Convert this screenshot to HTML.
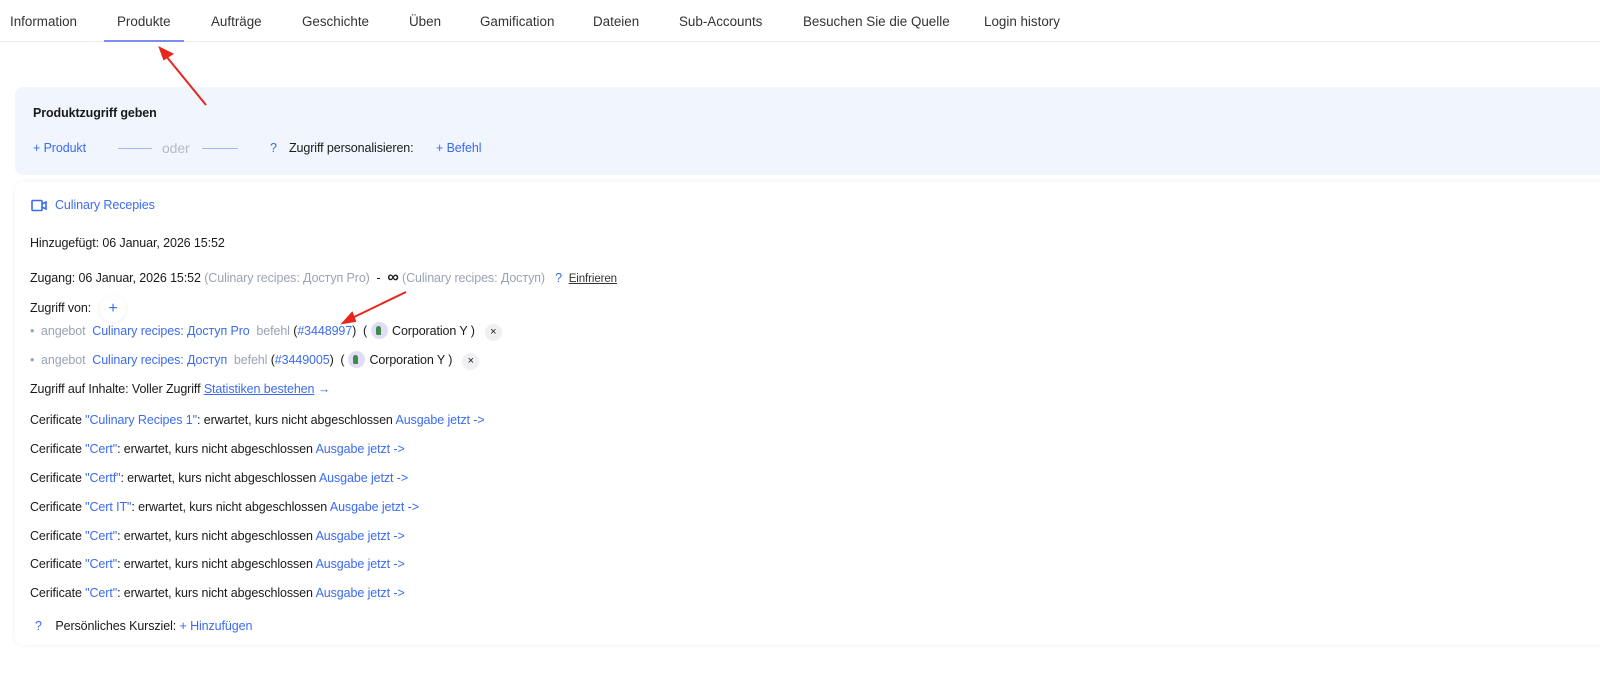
<!DOCTYPE html>
<html><head><meta charset="utf-8"><style>
*{margin:0;padding:0;box-sizing:border-box}
body{width:1600px;height:673px;background:#fff;font-family:"Liberation Sans",sans-serif;color:#1a1a1a;position:relative;overflow:hidden;font-size:12.5px;letter-spacing:-0.1px}
.tabs{position:absolute;left:0;top:0;width:1600px;height:42px;border-bottom:1px solid #ebedf0}
.tab{position:absolute;top:14px;font-size:13.4px;color:#333;letter-spacing:0}
.ul{position:absolute;left:104px;top:40px;width:80px;height:2px;background:#7b8df0}
.box{position:absolute;left:15px;top:87px;width:1600px;height:88px;background:#f0f5fe;border-radius:8px}
.card{position:absolute;left:15px;top:182px;width:1600px;height:463px;background:#fff;border-radius:8px;box-shadow:0 0 6px rgba(0,0,0,0.06)}
.l{position:absolute;white-space:nowrap}
.b{color:#3b6cf0}.g{color:#9aa3b5}
.av{display:inline-block;width:17px;height:17px;border-radius:50%;background:#e3dcf5;vertical-align:-4px;margin:0 4px;position:relative}
.av:after{content:"";position:absolute;left:5px;top:4px;width:5px;height:9px;background:#3e8a4a;border-radius:3px 3px 0 2px}
.x{display:inline-block;width:17px;height:17px;border-radius:50%;background:#f0f0f2;text-align:center;line-height:17px;font-size:11px;margin-left:10px}
</style></head><body>
<div class="tabs">
<span class="tab" style="left:10px">Information</span>
<span class="tab" style="left:117px">Produkte</span>
<span class="tab" style="left:211px">Aufträge</span>
<span class="tab" style="left:302px">Geschichte</span>
<span class="tab" style="left:409px">Üben</span>
<span class="tab" style="left:480px">Gamification</span>
<span class="tab" style="left:593px">Dateien</span>
<span class="tab" style="left:679px">Sub-Accounts</span>
<span class="tab" style="left:803px">Besuchen Sie die Quelle</span>
<span class="tab" style="left:984px">Login history</span>
<div class="ul"></div>
</div>
<div class="box"></div>
<div class="l" style="left:33px;top:106px;font-weight:bold;font-size:12.5px">Produktzugriff geben</div>
<div class="l b" style="left:33px;top:141px">+ Produkt</div>
<div class="l" style="left:118px;top:148px;width:34px;height:1px;background:#a9b8f0"></div>
<div class="l" style="left:162px;top:140px;color:#b5bcc8;font-size:14px">oder</div>
<div class="l" style="left:202px;top:148px;width:36px;height:1px;background:#a9b8f0"></div>
<div class="l b" style="left:270px;top:141px">?</div>
<div class="l" style="left:289px;top:141px">Zugriff personalisieren:</div>
<div class="l b" style="left:436px;top:141px">+ Befehl</div>
<div class="card"></div>
<svg class="l" style="left:31px;top:199px" width="16" height="13" viewBox="0 0 16 13"><rect x="1" y="1.5" width="10" height="10" rx="1" fill="none" stroke="#3b6cf0" stroke-width="1.6"/><path d="M11 5l4-2v7l-4-2" fill="none" stroke="#3b6cf0" stroke-width="1.6"/></svg>
<div class="l b" style="left:55px;top:198px">Culinary Recepies</div>
<div class="l" style="left:30px;top:236px">Hinzugefügt: 06 Januar, 2026 15:52</div>
<div class="l" style="left:30px;top:269px">Zugang: 06 Januar, 2026 15:52 <span class="g">(Culinary recipes: Доступ Pro)</span> &nbsp;- &nbsp;<b style="font-size:16px">∞</b> <span class="g">(Culinary recipes: Доступ)</span> &nbsp;&nbsp;<span class="b">?</span> &nbsp;<u style="font-size:11.5px;color:#333">Einfrieren</u></div>
<div class="l" style="left:30px;top:301px">Zugriff von:</div>
<div class="l" style="left:100px;top:296px;width:26px;height:26px;border-radius:50%;background:#fff;box-shadow:0 1px 4px rgba(0,0,0,0.08);color:#3b6cf0;text-align:center;line-height:25px;font-size:16px">+</div>
<div class="l" style="left:30px;top:322px"><span class="g">•&nbsp; angebot</span> &nbsp;<span class="b">Culinary recipes: Доступ Pro</span> &nbsp;<span class="g">befehl</span> (<span class="b">#3448997</span>) &nbsp;(<span class="av"></span>Corporation Y )<span class="x">×</span></div>
<div class="l" style="left:30px;top:351px"><span class="g">•&nbsp; angebot</span> &nbsp;<span class="b">Culinary recipes: Доступ</span> &nbsp;<span class="g">befehl</span> (<span class="b">#3449005</span>) &nbsp;(<span class="av"></span>Corporation Y )<span class="x">×</span></div>
<div class="l" style="left:30px;top:382px">Zugriff auf Inhalte: Voller Zugriff <u class="b">Statistiken bestehen</u> <span class="b">→</span></div>
<div class="l" style="left:30px;top:413px">Cerificate <span class="b">"Culinary Recipes 1"</span>: erwartet, kurs nicht abgeschlossen <span class="b">Ausgabe jetzt -&gt;</span></div>
<div class="l" style="left:30px;top:442px">Cerificate <span class="b">"Cert"</span>: erwartet, kurs nicht abgeschlossen <span class="b">Ausgabe jetzt -&gt;</span></div>
<div class="l" style="left:30px;top:471px">Cerificate <span class="b">"Certf"</span>: erwartet, kurs nicht abgeschlossen <span class="b">Ausgabe jetzt -&gt;</span></div>
<div class="l" style="left:30px;top:500px">Cerificate <span class="b">"Cert IT"</span>: erwartet, kurs nicht abgeschlossen <span class="b">Ausgabe jetzt -&gt;</span></div>
<div class="l" style="left:30px;top:529px">Cerificate <span class="b">"Cert"</span>: erwartet, kurs nicht abgeschlossen <span class="b">Ausgabe jetzt -&gt;</span></div>
<div class="l" style="left:30px;top:557px">Cerificate <span class="b">"Cert"</span>: erwartet, kurs nicht abgeschlossen <span class="b">Ausgabe jetzt -&gt;</span></div>
<div class="l" style="left:30px;top:586px">Cerificate <span class="b">"Cert"</span>: erwartet, kurs nicht abgeschlossen <span class="b">Ausgabe jetzt -&gt;</span></div>
<div class="l" style="left:35px;top:619px"><span class="b">?</span> &nbsp;&nbsp;&nbsp;Persönliches Kursziel: <span class="b">+ Hinzufügen</span></div>
<svg class="l" style="left:0;top:0" width="1600" height="673"><g stroke="#e8261e" stroke-width="2" fill="#e8261e"><line x1="206" y1="105" x2="166" y2="56"/><path d="M160 48l12 6-8 5z"/><line x1="406" y1="292" x2="352" y2="318"/><path d="M343 323l9-10 3 8z"/></g></svg>
</body></html>
